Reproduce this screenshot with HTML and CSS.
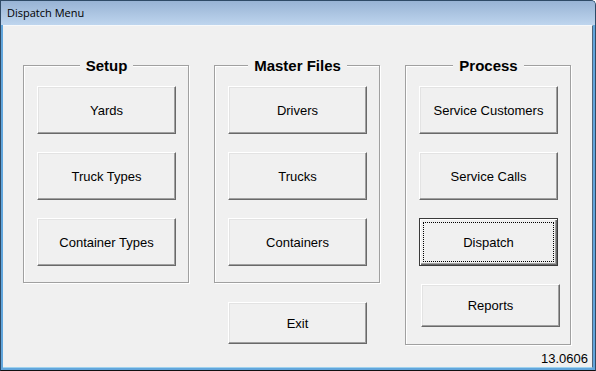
FILE: index.html
```html
<!DOCTYPE html>
<html lang="en">
<head>
    <meta charset="UTF-8">
    <title>Dispatch Menu</title>
    <link rel="stylesheet" href="styles.css">
</head>
<body>

    <div class="window">
        <div class="titlebar">
            <span class="title">Dispatch Menu</span>
        </div>

        <div class="client">
            <div class="columns">
                <fieldset class="group">
                    <legend>Setup</legend>
                    <button class="btn">Yards</button>
                    <button class="btn">Truck Types</button>
                    <button class="btn">Container Types</button>
                </fieldset>

                <div class="col">
                    <fieldset class="group">
                        <legend>Master Files</legend>
                        <button class="btn">Drivers</button>
                        <button class="btn">Trucks</button>
                        <button class="btn">Containers</button>
                    </fieldset>
                    <button class="btn btn-exit">Exit</button>
                </div>

                <fieldset class="group group-process">
                    <legend>Process</legend>
                    <button class="btn">Service Customers</button>
                    <button class="btn">Service Calls</button>
                    <button class="btn btn-default">Dispatch</button>
                    <button class="btn btn-reports">Reports</button>
                </fieldset>
            </div>

            <div class="version">13.0606</div>
        </div>
    </div>

</body>
</html>
```

FILE: styles.css
```css
html, body {
    margin: 0;
    padding: 0;
}
body {
    width: 596px;
    height: 371px;
    overflow: hidden;
    font-family: "Liberation Sans", Arial, sans-serif;
    font-size: 13px;
    color: #000;
}
.window {
    box-sizing: border-box;
    width: 596px;
    height: 371px;
    display: flex;
    flex-direction: column;
    background-color: #62a6dc;
    border: 1px solid #2f4a66;
    border-bottom-color: #111;
    border-top-right-radius: 5px;
    padding: 0 2px 2px 2px;
}
.titlebar {
    height: 24px;
    margin: 0 -2px;
    padding-left: 6px;
    display: flex;
    align-items: center;
    background: linear-gradient(#98b3d4, #bed5ee);
    border-top-right-radius: 4px;
}
.title {
    font-family: "Open Sans", "Noto Sans", sans-serif;
    font-size: 11px;
    color: #000;
    padding-bottom: 1px;
}
.client {
    flex: 1;
    display: flex;
    flex-direction: column;
    background-color: #f0f0f0;
    border-top: 1px solid #f6f8fa;
    border-right: 1px solid #51667c;
    border-bottom: 1px solid #9fd2ee;
}
.columns {
    display: flex;
    align-items: flex-start;
    gap: 25px;
    padding: 31px 0 0 20px;
}
.col {
    display: flex;
    flex-direction: column;
}
.group {
    box-sizing: border-box;
    width: 166px;
    min-width: 0;
    margin: 0;
    padding: 12px 12px 16px 13px;
    border: 1px solid #a0a0a0;
    box-shadow: inset 1px 1px 0 #fff, 1px 1px 0 #fff;
}
.group legend {
    margin: 0 auto;
    padding: 0 6px;
    font-size: 15px;
    line-height: 17px;
    font-weight: bold;
    background-color: #f0f0f0;
}
.group-process {
    padding-bottom: 17px;
}
.btn {
    display: block;
    box-sizing: border-box;
    width: 139px;
    height: 48px;
    margin: 0 0 18px 0;
    padding: 0;
    font-family: "Liberation Sans", Arial, sans-serif;
    font-size: 13px;
    color: #000;
    background-color: #f0f0f0;
    border-style: solid;
    border-width: 1px;
    border-color: #fff #696969 #696969 #fff;
    box-shadow: inset -1px -1px 0 #a0a0a0, inset 1px 1px 0 #e3e3e3;
}
.btn:last-child {
    margin-bottom: 0;
}
.btn-default {
    border: 1px solid #3a3a3a;
    box-shadow: inset 1px 1px 0 #fff, inset -1px -1px 0 #696969, inset -2px -2px 0 #a0a0a0;
    outline: 1px dotted #000;
    outline-offset: -5px;
}
.btn-reports {
    height: 43px;
    margin-left: 2px;
}
.btn-exit {
    height: 42px;
    margin: 19px 0 0 14px;
}
.version {
    margin-top: auto;
    padding: 0 4px 1px 0;
    line-height: 15px;
    text-align: right;
}
```
